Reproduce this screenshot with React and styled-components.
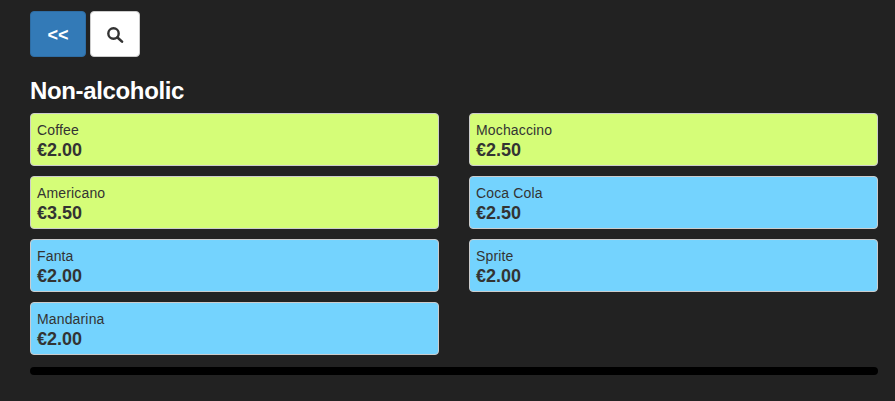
import React from "react";
import styled, { createGlobalStyle } from "styled-components";

const GlobalStyle = createGlobalStyle`
  html, body {
    margin: 0;
    padding: 0;
    background: #222222;
    font-family: "Liberation Sans", Arial, sans-serif;
    color: #333;
  }
`;

const Page = styled.div`
  box-sizing: border-box;
  width: 895px;
  height: 401px;
  padding: 11px 17px 0 30px;
  overflow: hidden;
`;

const Toolbar = styled.div`
  display: flex;
  gap: 4px;
`;

const ToolButton = styled.button`
  box-sizing: border-box;
  display: flex;
  align-items: center;
  justify-content: center;
  width: ${(p) => p.$width}px;
  height: 46px;
  padding: ${(p) => (p.$primary ? "2px 0 0" : "0")};
  border-radius: 4px;
  border: 1px solid ${(p) => (p.$primary ? "#2e6da4" : "#ccc")};
  background: ${(p) => (p.$primary ? "#337ab7" : "#fff")};
  color: ${(p) => (p.$primary ? "#fff" : "#333")};
  font-family: inherit;
  font-size: 18px;
  font-weight: 700;
`;

const Heading = styled.h3`
  margin: 21px 0 9px;
  color: #fff;
  font-size: 24px;
  line-height: 26px;
  font-weight: 700;
  letter-spacing: -0.35px;
`;

const Grid = styled.div`
  display: grid;
  grid-template-columns: 409px 409px;
  column-gap: 30px;
  row-gap: 10px;
`;

const Card = styled.div`
  box-sizing: border-box;
  height: 53px;
  padding: 8px 6px 0;
  border: 1px solid #ccc;
  border-radius: 4px;
  background: ${(p) => (p.$kind === "hot" ? "#d5fd78" : "#74d3fe")};
`;

const Name = styled.div`
  font-size: 14px;
  line-height: 16px;
  letter-spacing: 0.15px;
`;

const Price = styled.div`
  margin-top: 2px;
  font-size: 18px;
  line-height: 20px;
  font-weight: 700;
`;

const Divider = styled.div`
  height: 8px;
  margin-top: 12px;
  border-radius: 4px;
  background: #000;
`;

const items = [
  { name: "Coffee", price: "€2.00", kind: "hot" },
  { name: "Mochaccino", price: "€2.50", kind: "hot" },
  { name: "Americano", price: "€3.50", kind: "hot" },
  { name: "Coca Cola", price: "€2.50", kind: "cold" },
  { name: "Fanta", price: "€2.00", kind: "cold" },
  { name: "Sprite", price: "€2.00", kind: "cold" },
  { name: "Mandarina", price: "€2.00", kind: "cold" },
];

const SearchIcon = () => (
  <svg width="18" height="18" viewBox="0 0 18 18" fill="none" stroke="#333">
    <circle cx="7.5" cy="8.5" r="5.2" strokeWidth="2.4" />
    <path d="M11.5 12.5 L16 16.6" strokeWidth="2.6" strokeLinecap="round" />
  </svg>
);

export default function App() {
  return (
    <Page>
      <GlobalStyle />
      <Toolbar>
        <ToolButton $primary $width={56}>&lt;&lt;</ToolButton>
        <ToolButton $width={50}><SearchIcon /></ToolButton>
      </Toolbar>
      <Heading>Non-alcoholic</Heading>
      <Grid>
        {items.map((item) => (
          <Card key={item.name} $kind={item.kind}>
            <Name>{item.name}</Name>
            <Price>{item.price}</Price>
          </Card>
        ))}
      </Grid>
      <Divider />
    </Page>
  );
}
